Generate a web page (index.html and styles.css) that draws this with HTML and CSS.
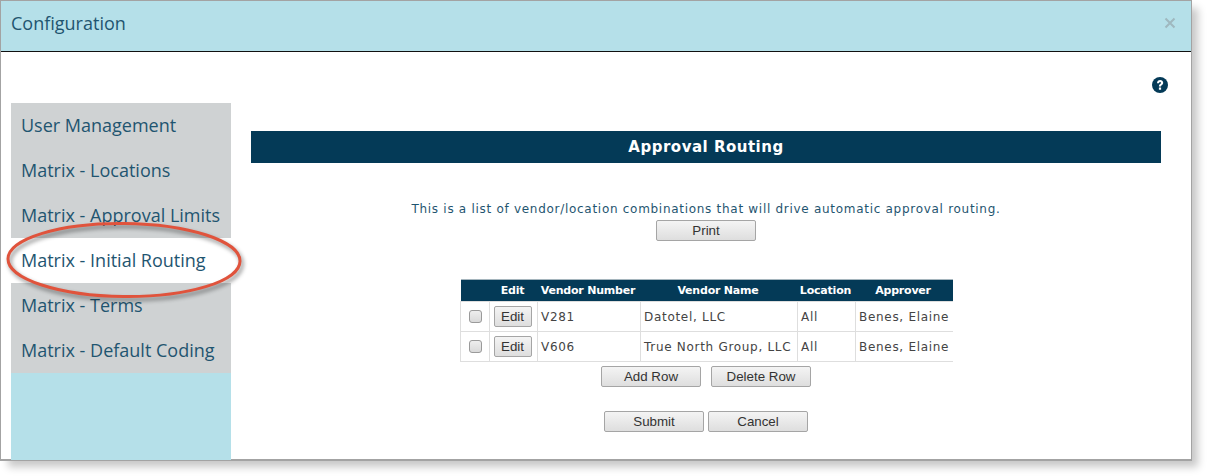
FILE: index.html
```html
<!DOCTYPE html>
<html lang="en">

<head>
    <meta charset="UTF-8">
    <meta name="viewport" content="width=device-width, initial-scale=1.0">
    <title>Configuration</title>
    <link rel="stylesheet" href="styles.css">
</head>

<body>
    <div class="dialog">
        <div class="dialog-header">
            <span class="dialog-title">Configuration</span>
            <svg class="close-icon" width="12" height="12" viewBox="0 0 12 12" aria-hidden="true">
                <path d="M1.5 1.5L10.5 10.5M10.5 1.5L1.5 10.5" />
            </svg>
        </div>

        <div class="dialog-body">
            <div class="sidebar">
                <ul class="side-menu">
                    <li>User Management</li>
                    <li>Matrix - Locations</li>
                    <li>Matrix - Approval Limits</li>
                    <li class="active">Matrix - Initial Routing</li>
                    <li>Matrix - Terms</li>
                    <li>Matrix - Default Coding</li>
                </ul>
            </div>

            <div class="content">
                <div class="help-row">
                    <svg class="help-icon" width="16" height="16" viewBox="0 0 16 16" aria-hidden="true">
                        <circle cx="8" cy="8" r="8" />
                        <path class="help-mark" d="M5 6.200C5.100 4.200 6.400 3 8.100 3C9.900 3 11.200 4.200 11.200 5.800C11.200 7.100 10.500 7.700 9.700 8.200C9.200 8.500 9.100 8.700 9.100 9.500H6.900C6.900 8.200 7.200 7.600 8.100 7C8.700 6.600 9 6.400 9 5.900C9 5.400 8.600 5.100 8.100 5.100C7.500 5.100 7.100 5.500 7 6.200ZM6.900 10.400H9.100V12.800H6.900Z" />
                    </svg>
                </div>

                <h2 class="section-bar">Approval Routing</h2>

                <p class="intro">This is a list of vendor/location combinations that will drive automatic approval routing.</p>
                <div class="button-row print-row">
                    <button>Print</button>
                </div>

                <table class="routing-table">
                    <thead>
                        <tr>
                            <th class="col-check"></th>
                            <th class="col-edit">Edit</th>
                            <th class="col-number">Vendor Number</th>
                            <th class="col-name">Vendor Name</th>
                            <th class="col-location">Location</th>
                            <th class="col-approver">Approver</th>
                        </tr>
                    </thead>
                    <tbody>
                        <tr>
                            <td class="cell-center cell-check"><input type="checkbox" class="row-check"></td>
                            <td class="cell-center cell-edit"><button class="edit-btn">Edit</button></td>
                            <td>V281</td>
                            <td>Datotel, LLC</td>
                            <td>All</td>
                            <td>Benes, Elaine</td>
                        </tr>
                        <tr>
                            <td class="cell-center cell-check"><input type="checkbox" class="row-check"></td>
                            <td class="cell-center cell-edit"><button class="edit-btn">Edit</button></td>
                            <td>V606</td>
                            <td>True North Group, LLC</td>
                            <td>All</td>
                            <td>Benes, Elaine</td>
                        </tr>
                    </tbody>
                </table>

                <div class="button-row row-actions">
                    <button>Add Row</button>
                    <button>Delete Row</button>
                </div>

                <div class="button-row form-actions">
                    <button>Submit</button>
                    <button>Cancel</button>
                </div>
            </div>
        </div>

        <svg class="callout" width="240" height="82" viewBox="0 0 240 82" aria-hidden="true">
            <ellipse cx="118" cy="38" rx="116" ry="36.500" transform="rotate(0.6 118 38)" />
        </svg>
    </div>
</body>

</html>
```

FILE: styles.css
```css
* {
    box-sizing: border-box;
}

body {
    margin: 0;
    padding-bottom: 15px;
    background-color: white;
    font-family: "DejaVu Sans", Verdana, sans-serif;
}

.dialog {
    position: relative;
    width: 1192px;
    height: 461px;
    border: 1px solid #a3a3a3;
    border-bottom-width: 2px;
    background: white;
    box-shadow: 7px 7px 8px -1px rgba(0, 0, 0, 0.22);
}

.dialog-header {
    display: flex;
    align-items: center;
    justify-content: space-between;
    height: 51px;
    padding: 0 15px 6px 10px;
    background-color: #b5e0e9;
    border-bottom: 1px solid #111;
}

.dialog-title {
    font-family: "Open Sans", sans-serif;
    font-size: 18px;
    color: #1f5570;
}

.close-icon path {
    fill: none;
    stroke: #9fb8bf;
    stroke-width: 2;
}

.dialog-body {
    display: flex;
    height: 408px;
}

.sidebar {
    width: 220px;
    margin: 51px 0 0 10px;
    background-color: #b5e0e9;
}

.side-menu {
    list-style: none;
    margin: 0;
    padding: 0;
}

.side-menu li {
    height: 45px;
    padding: 0 0 0 10px;
    line-height: 45px;
    background-color: #cfd2d3;
    font-family: "Open Sans", sans-serif;
    font-size: 18px;
    color: #1f5570;
    white-space: nowrap;
}

.side-menu li.active {
    background-color: white;
}

.content {
    width: 910px;
    margin-left: 20px;
    text-align: center;
}

.help-row {
    display: flex;
    justify-content: flex-end;
    height: 79px;
    padding: 25px 0 0 0;
    margin-right: -7px;
}

.help-icon circle {
    fill: #043a57;
}

.help-mark {
    fill: white;
}

.section-bar {
    height: 32px;
    margin: 0;
    line-height: 32px;
    background-color: #043a57;
    color: white;
    font-size: 15px;
    font-weight: bold;
    letter-spacing: 0.5px;
}

.intro {
    margin: 38px 0 0 0;
    height: 19px;
    line-height: 16px;
    font-size: 12px;
    letter-spacing: 0.71px;
    color: #1f5570;
}

.button-row {
    display: flex;
    justify-content: center;
}

button {
    width: 100px;
    height: 21px;
    padding: 0;
    border: 1px solid #a5a5a5;
    border-radius: 2px;
    background: linear-gradient(#f4f4f4, #dedede);
    font-family: "Liberation Sans", Arial, sans-serif;
    font-size: 13.33px;
    color: #333;
}

.routing-table {
    width: 492px;
    margin: 38px 0 0 209px;
    border-collapse: collapse;
    table-layout: fixed;
    font-size: 12px;
    color: #444;
}

.routing-table th {
    height: 22px;
    padding: 0 2px 0 0;
    background-color: #043a57;
    border-top: 1px solid #a5b5bd;
    color: white;
    font-size: 11px;
    font-weight: bold;
    letter-spacing: -0.2px;
    white-space: nowrap;
}

.routing-table td {
    height: 30px;
    padding: 0 0 0 3px;
    border: 1px solid #dedede;
    text-align: left;
    letter-spacing: 0.7px;
    white-space: nowrap;
    overflow: hidden;
}

.routing-table td:last-child {
    border-right: none;
}

.routing-table td.cell-center {
    text-align: center;
}

.routing-table td.cell-check {
    padding: 0 0 2px 0;
}

.routing-table td.cell-edit {
    padding: 0 2px 0 0;
}

.col-check {
    width: 29px;
}

.col-edit {
    width: 48px;
}

.col-number {
    width: 103px;
}

.col-name {
    width: 157px;
}

.col-location {
    width: 58px;
}

.col-approver {
    width: 97px;
}

.row-check {
    appearance: none;
    width: 13px;
    height: 13px;
    margin: 0;
    border: 1px solid #9a9a9a;
    border-radius: 3px;
    background: linear-gradient(#eeeeee, #d9d9d9);
    vertical-align: middle;
}

.edit-btn {
    width: 38px;
    vertical-align: middle;
    letter-spacing: 0;
}

.row-actions {
    gap: 10px;
    margin-top: 4px;
}

.form-actions {
    gap: 4px;
    margin-top: 24px;
}

.callout {
    position: absolute;
    left: 5px;
    top: 221px;
    overflow: visible;
    filter: drop-shadow(2px 3px 2px rgba(0, 0, 0, 0.45));
}

.callout ellipse {
    fill: none;
    stroke: #e0533c;
    stroke-width: 3;
}
```
